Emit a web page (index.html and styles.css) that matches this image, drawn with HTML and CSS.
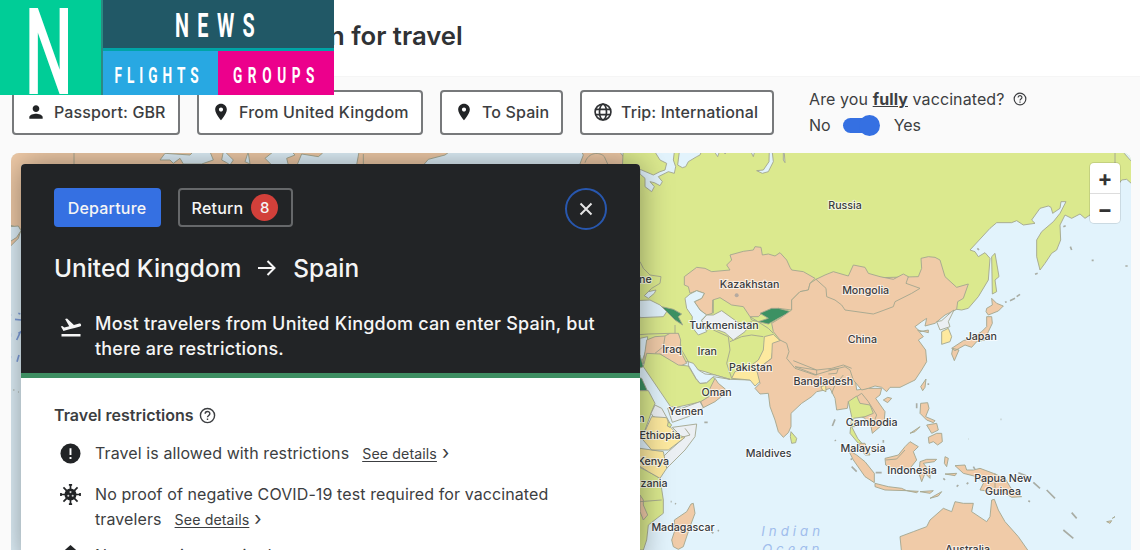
FILE: index.html
```html
<!DOCTYPE html>
<html lang="en">
<head>
    <meta charset="UTF-8">
    <meta name="viewport" content="width=device-width, initial-scale=1.0">
    <title>Travel map</title>
    <link rel="stylesheet" href="styles.css">
</head>
<body>
    <header class="top"><h1>n for travel</h1></header>

    <div class="filters">
        <button class="chip passport">
            <svg class="icon" viewBox="0 0 24 24"><path d="M12 12c2.21 0 4-1.79 4-4s-1.79-4-4-4-4 1.79-4 4 1.79 4 4 4zm0 2c-2.67 0-8 1.34-8 4v2h16v-2c0-2.66-5.33-4-8-4z"/></svg>
            <span>Passport: GBR</span>
        </button>
        <button class="chip from">
            <svg class="icon" viewBox="0 0 24 24"><path d="M12 2C8.13 2 5 5.13 5 9c0 5.25 7 13 7 13s7-7.75 7-13c0-3.87-3.13-7-7-7zm0 9.5c-1.38 0-2.5-1.12-2.5-2.5s1.12-2.5 2.5-2.5 2.5 1.12 2.5 2.5-1.12 2.5-2.5 2.5z"/></svg>
            <span>From United Kingdom</span>
        </button>
        <button class="chip to">
            <svg class="icon" viewBox="0 0 24 24"><path d="M12 2C8.13 2 5 5.13 5 9c0 5.25 7 13 7 13s7-7.75 7-13c0-3.87-3.13-7-7-7zm0 9.5c-1.38 0-2.5-1.12-2.5-2.5s1.12-2.5 2.5-2.5 2.5 1.12 2.5 2.5-1.12 2.5-2.5 2.5z"/></svg>
            <span>To Spain</span>
        </button>
        <button class="chip trip">
            <svg class="icon globe" viewBox="0 0 24 24"><circle cx="12" cy="12" r="9.5"/><ellipse cx="12" cy="12" rx="4.2" ry="9.5"/><path d="M3.2 8.8h17.6M3.2 15.2h17.6"/></svg>
            <span>Trip: International</span>
        </button>
        <div class="vaccine">
            <div class="question">
                <span>Are you <b>fully</b> vaccinated?</span>
                <svg class="help" viewBox="0 0 24 24"><circle cx="12" cy="12" r="10"/><path d="M8.7 9.6c0-4.3 6.6-4.3 6.6-.2 0 2.5-3.3 2.6-3.3 5.1M12 16.3v2"/></svg>
            </div>
            <div class="answer">
                <span>No</span>
                <i class="switch"></i>
                <span>Yes</span>
            </div>
        </div>
    </div>

    <main class="map">
        <!-- three map units to a pixel -->
        <svg class="world" viewBox="-1872 9 3360 1191">
            <!-- north america, greenland, scandinavia -->
            <g class="orange">
                <path d="M-1890-10H-930L-938 10-950 20-1000 12-1020 60H-1800V225L-1842 240-1850 265-1875 290V275L-1855 255-1845 235-1875 225Z"/>
                <path d="M-825-10-838 60H-660L-632 42-620 28-570 15-550 0Z"/>
                <path d="M-168-10-155 15-172 60H-20L-35 20-50 0Z"/>
                <path class="line" d="M-1683 9V42M-815 12V42M-150 38C-140 5-105 5-92 20L-82 42"/>
            </g>
            <g class="water">
                <path d="M-1410 10-1425 30-1395 30-1385 40-1365 25-1355 42H-1300L-1265 30-1275 5H-1325L-1335 15Z"/>
                <path d="M-1235 5-1240 30-1225 38-1215 45-1205 30-1230 5Z"/>
                <path d="M-1160 5-1170 35-1155 42-1160 10ZM-1085 5-1110 25-1090 45H-1040L-1045 25-1020 15-1035 0Z"/>
                <path d="M-1875 230-1850 228-1842 242-1855 262-1875 275Z"/>
            </g>

            <!-- russia and the land south-west of it -->
            <path class="green" d="M-35-10H1500V110L1475 88 1460 90 1440 118 1405 150 1365 195 1350 205 1335 192 1310 205 1290 195 1275 225 1277 270 1265 300 1250 310 1230 340 1215 360 1205 320V270L1220 245 1255 215 1275 190 1293 155 1278 155 1275 175 1253 190 1248 172 1240 168 1215 175 1190 210 1200 220 1165 225 1145 212 1130 218 1085 218 1065 235 1005 300 1020 305 1030 320 1050 308 1065 325 1060 390 1030 440 1000 475 980 480 965 478 900 460 700 520 440 600 430 690 345 690 285 688 240 675 210 665 190 660 160 635 100 640 0 640-40 100Z"/>
            <path class="green" d="M1070 320 1080 310 1092 380 1080 390 1085 425 1072 432Z"/>
            <g class="line">
                <path d="M15 335 25 355 45 375 78 380 75 400 50 415 35 430M120 525V550M0 555 40 552 105 550M130 550 140 600 160 635M230 495 235 540 280 560 285 600 275 640 290 685M285 575 320 560 350 555 385 560M235 450V490M1440 9V45"/>
                <path d="M370 515 350 510 345 500 400 535 415 550"/>
            </g>
            <g class="water">
                <path d="M50-10 75 30 95 40 90 60 75 65 55 75 15 58V72L30 85 30 110 50 125 58 110 45 95 58 98 75 107 82 95 70 80 100 65 118 70 122 50 115 30 120-10Z"/>
                <path d="M135-10 128 45 142 53 152 50 160 35 185 20 195 15 205-10ZM410-10 415 35 400 65 382 70 365 62 385 60 402 35 403 0ZM445 5V30L450 38 448 10ZM235 0 248 20 255 0ZM265 0 270 12 280 0ZM345 0 355 20 360 0Z"/>
                <path d="M0 452 45 450 75 465 95 485 85 500 15 503ZM28 437 40 425 63 420 58 430 40 445Z"/>
                <path d="M1450-10 1490 35V-10Z"/>
                <path d="M15 565 38 560 35 595 15 650Z"/>
            </g>
            <g class="orange">
                <path d="M148 380 185 352 210 355 230 365 285 360 275 345 290 330 285 315 325 304 355 300 360 290 378 292 382 315 400 312 420 318 435 308 455 330 465 352 470 360 505 365 540 385 525 400 520 420 495 425 470 450 470 480 430 475 380 490 370 500 345 500 325 470 290 465 255 443 233 450 232 490 215 495 195 480 178 455 200 445 208 430 185 422 165 430 160 410 148 405Z"/>
                <path d="M35 570 60 560 90 558 105 550 130 550 137 570 135 600 155 640 130 650 75 612 25 640Z"/>
                <path class="line" d="M90 558 85 590 60 610"/>
            </g>
            <path class="water" d="M150 445 165 432 185 422 208 430 200 445 178 455 195 480 215 495 200 510 215 545 190 555 170 530 172 500 155 475Z"/>
            <path class="gray" d="M215 495 235 495 260 482 285 500 320 525 350 515 330 545 295 570 270 548 235 535 215 540 200 512Z"/>
            <path class="dark" d="M375 490 410 475 430 475 468 485 430 505 400 522 370 515 400 505ZM80 470 115 478 140 492 130 500 143 525 120 510 100 490Z"/>

            <!-- middle east and africa -->
            <path class="green" d="M25 650 35 610 75 612 130 645 160 648 185 690 195 700 215 698 235 680 240 690 235 730 200 755 110 775Z"/>
            <path class="water" d="M160 635 175 640 190 660 210 672 240 675 285 688 235 680 215 698 195 700 183 685 160 645Z"/>
            <path class="orange" d="M240 685 250 700 272 718 265 735 240 755 205 773 197 755 225 738 225 715Z"/>
            <path class="gray" d="M98 775 110 770 140 775 195 755 205 773 160 800 112 817Z"/>
            <path class="dark" d="M0 620 15 615 25 650 12 655ZM0 680 20 685 37 722H0Z"/>
            <path class="green" d="M0 722H40L60 760 48 790 30 840 0 870ZM0 945 40 965 75 985 85 1050 85 1090 40 1125 35 1170 25 1200H0Z"/>
            <path class="gray" d="M60 765 80 775 105 820 95 815 55 800 48 790ZM112 832 185 822 180 860 150 900 95 955 85 920 100 905 145 865Z"/>
            <path class="yellow" d="M50 800 95 803 105 830 130 855 150 862 100 900 50 900 20 865ZM15 895 85 905 95 955 75 985 40 965 0 940Z"/>
            <path class="green" d="M100 815 110 825 105 832 97 828Z"/>
            <path class="orange" d="M15 1035 25 1050 25 1065 38 1095 25 1110 15 1085ZM175 1060 180 1090 165 1130 145 1190 130 1198 115 1190 110 1170 120 1140 118 1110 155 1085 168 1062Z"/>
            <path class="line" d="M15 1055 80 1050M150 835 165 855 130 865"/>

            <!-- south and east asia -->
            <path class="yellow" d="M388 560 415 553 435 572 470 580 420 585 412 610 410 625 370 655 380 690 360 708 345 690 290 685 300 665 345 655 350 645 370 630 385 600Z"/>
            <path class="orange" d="M412 580 440 570 500 600 655 640 665 720 700 715 740 715 735 735 722 745 750 785 747 820 712 850 708 830 690 805 655 790 640 755 637 775 605 780 600 745 585 715 570 720 545 725 530 740 500 760 468 790 468 830 460 848 445 862 430 845 420 810 405 770 400 730 375 732 360 715 375 700 365 660 410 625Z"/>
            <path class="orange" d="M543 388 525 400 520 420 495 425 470 450 470 480 435 505 410 520 415 545 435 570 455 580 462 605 455 625 480 655 540 675 590 660 630 650 645 660 655 690 680 720 700 715 720 708 740 712 755 725 765 712 795 712 840 690 860 660 875 635 872 600 850 570 865 560 848 540 880 548 880 540 855 545 840 530 860 515 875 505 870 528 900 520 930 495 965 478 968 455 985 445 1000 402 965 412 930 380 915 330 900 322 880 320 858 325 860 355 850 380Z"/>
            <path class="orange" d="M543 388 570 375 595 365 640 378 655 345 690 352 700 370 735 380 775 388 805 372 820 380 813 400 855 415 830 430 780 455 775 470 735 485 715 492 630 480 620 465 600 450 575 440 573 415Z"/>
            <path class="line" d="M475 632 545 660 590 655 625 645 650 655M545 660V675L480 650ZM580 660 610 655 605 670 580 672M590 730 600 705 625 675M665 740 680 730 700 755 725 795 715 820"/>
            <path class="yellow" d="M558 710 572 705 573 725 562 720Z"/>
            <path class="green" d="M640 755 665 738 675 760 705 765 715 790 690 800 655 805 660 830 650 830 668 865 685 885 670 880 645 850 650 800ZM468 845 485 865 482 878 470 880 466 860Z"/>
            <path class="gray" d="M905 515 920 512 950 485 957 480 940 515 945 530 915 540Z"/>
            <path class="yellow" d="M920 545 940 535 950 560 945 575 920 583Z"/>
            <g class="orange">
                <path d="M1070 445 1085 460 1105 468 1090 483 1060 495 1053 485 1055 475 1072 465ZM1055 500 1070 500 1072 520 1060 545 1050 570 1025 575 1010 592 990 585 960 602 950 595 985 572 1010 565 1040 545 1055 530ZM953 595 972 600 958 632 950 612Z"/>
                <path d="M857 710 873 687 870 712 863 722ZM745 750 758 742 770 745 758 758Z"/>
                <path d="M857 760 878 758 882 775 872 800 900 812 895 818 875 810 855 790ZM875 825 905 820 910 840 890 850ZM880 862 905 850 920 850 922 875 908 885 895 875 882 880ZM825 850 855 830 840 845Z"/>
                <path d="M640 900 665 915 690 935 718 970 718 998 690 980 655 930ZM720 1000 760 1010 800 1015 815 1022 750 1020 720 1010ZM670 880 690 880 705 915 690 915Z"/>
                <path d="M750 925 790 915 810 890 825 875 850 890 835 905 845 930 825 955 770 955 752 945ZM855 935 875 928 905 928 898 935 865 940 885 965 885 985 870 970 860 995 852 970Z"/>
                <path d="M815 1022 850 1024 845 1028ZM855 1025 895 1022 885 1030ZM885 1045 920 1025 910 1038ZM930 920 940 925 935 950 928 940ZM930 972 965 970 960 977Z"/>
                <path d="M960 947 990 945 995 960 1015 960 1035 955 1075 970 1110 985 1125 1010 1140 1030 1160 1040 1130 1042 1095 1020 1070 1025 1035 1020 1045 1000 1025 980 985 970Z"/>
                <path d="M795 1160 835 1145 875 1130 885 1110 925 1075 950 1085 960 1055 985 1060 1015 1060 1010 1085 1055 1115 1065 1100 1070 1050 1078 1048 1090 1080 1110 1115 1150 1160 1185 1210H800Z"/>
                <path class="line" d="M752 930 785 927 810 900M1080 970V1015"/>
                <path d="M1415 1115 1430 1112 1425 1120ZM1432 1105 1440 1100Z"/>
            </g>
            <path class="islands" d="M1110 457 1115 455M1125 452 1140 445M1145 440 1155 433M1306 290 1310 300M1370 331H1376M1471 348H1478M1200 373 1208 370M1027 295 1032 300M1285 230 1292 227M208 817H218M592 828 600 808M600 870 602 873M107 1055H110M120 1060 123 1062M230 1145 235 1150M248 1141 252 1143M745 870V878M650 950 665 965M648 925 650 930M1150 968 1175 978M1195 997 1215 1015M1235 1020 1260 1045M1310 1088 1325 1105M1285 1140 1315 1165M1097 808H1099M1000 867H1001M925 985 930 990M965 1010 970 1005M995 1002 1000 998M1015 950 1020 958M722 968H740M1180 1052 1185 1055M845 760V775M880 700V705"/>

            <g class="labels">
                <text x="630" y="176">Russia</text>
                <text x="344" y="414">Kazakhstan</text>
                <text x="692" y="432">Mongolia</text>
                <text x="682" y="580">China</text>
                <text x="267" y="536">Turkmenistan</text>
                <text x="111" y="610">Iraq</text>
                <text x="217" y="615">Iran</text>
                <text x="347" y="664">Pakistan</text>
                <text x="565" y="706">Bangladesh</text>
                <text x="245" y="738">Oman</text>
                <text x="153" y="794">Yemen</text>
                <text x="75" y="867">Ethiopia</text>
                <text x="55" y="945">Kenya</text>
                <text x="29" y="1012">Tanzania</text>
                <text x="-9" y="398">Ukraine</text>
                <text x="29" y="815" text-anchor="end">n</text>
                <text x="144" y="1144">Madagascar</text>
                <text x="401" y="920">Maldives</text>
                <text x="710" y="829">Cambodia</text>
                <text x="684" y="906">Malaysia</text>
                <text x="831" y="973">Indonesia</text>
                <text x="1039" y="570">Japan</text>
                <text x="1104" y="995">Papua New</text>
                <text x="1104" y="1034">Guinea</text>
                <text x="998" y="1208">Australia</text>
            </g>
            <circle class="city" cx="305" cy="436" r="6"/>
            <g class="sea">
                <text x="473" y="1158">Indian</text>
                <text x="473" y="1213">Ocean</text>
            </g>
            <path class="sea-marks" d="M-1850 490-1844 492M-1860 508-1842 510M-1874 492V498M-1850 550-1844 546-1855 570M-1874 550V560M-1848 615-1854 635M-1874 618V625"/>
            <path class="islands" d="M-1865 720H-1862M-1850 726H-1848"/>
        </svg>

        <div class="zoom">
            <button>+</button>
            <button>&minus;</button>
        </div>

        <section class="panel">
            <div class="summary">
                <div class="tabs">
                    <button class="tab active">Departure</button>
                    <button class="tab">Return <span class="badge">8</span></button>
                    <button class="close"><svg viewBox="0 0 14 14"><path d="M1.5 1.5 12.5 12.5M12.5 1.5 1.5 12.5"/></svg></button>
                </div>
                <h2>
                    <span>United Kingdom</span>
                    <svg class="arrow" viewBox="0 0 18 16"><path d="M0 8H16M9.500 1 16.500 8 9.500 15"/></svg>
                    <span>Spain</span>
                </h2>
                <div class="message">
                    <svg class="plane" viewBox="0 0 24 24"><path d="M2.5 19h19v2.500h-19zM22.070 9.640c-.21-.8-1.040-1.280-1.840-1.060L14.920 10l-6.900-6.430-1.930.51 4.140 7.170-4.970 1.330-1.970-1.540-1.450.39 1.820 3.160.77 1.330 1.600-.43 5.310-1.420 4.350-1.160L21 11.490c.81-.23 1.280-1.050 1.070-1.850z"/></svg>
                    <p>Most travelers from United Kingdom can enter Spain, but<br>there are restrictions.</p>
                </div>
            </div>
            <div class="details">
                <h3>
                    <span>Travel restrictions</span>
                    <svg class="help" viewBox="0 0 24 24"><circle cx="12" cy="12" r="10"/><path d="M8.7 9.6c0-4.3 6.6-4.3 6.6-.2 0 2.5-3.3 2.6-3.3 5.1M12 16.3v2"/></svg>
                </h3>
                <ul>
                    <li>
                        <svg class="item-icon" viewBox="0 0 22 22"><circle cx="11" cy="11" r="10.5"/><path class="cut" d="M11 5.5V12.500M11 14.700V16.800"/></svg>
                        <p>Travel is allowed with restrictions<a>See details</a><i>&rsaquo;</i></p>
                    </li>
                    <li>
                        <svg class="item-icon" viewBox="0 0 22 22">
                            <circle cx="11" cy="11" r="6.3"/>
                            <path class="spikes" d="M11 .5V21.500M.5 11H21.500M3.600 3.600 18.400 18.400M18.400 3.600 3.600 18.400M9.300 1H12.700M9.300 21H12.700M1 9.300V12.700M21 9.300V12.700"/>
                            <g class="dots"><circle cx="11" cy="8.500" r="1.100"/><circle cx="8.700" cy="12.300" r="1.100"/><circle cx="13.300" cy="12.300" r="1.100"/></g>
                        </svg>
                        <p>No proof of negative COVID-19 test required for vaccinated<br>travelers<a>See details</a><i>&rsaquo;</i></p>
                    </li>
                    <li>
                        <svg class="item-icon" viewBox="0 0 22 22"><path d="M11 0 20 8V21H2V8Z"/></svg>
                        <p>No quarantine required</p>
                    </li>
                </ul>
            </div>
        </section>
    </main>

    <!-- logo sits over the page corner -->
    <svg class="logo" viewBox="0 0 334 95">
        <rect width="334" height="95" fill="#00a4a6"/>
        <rect width="101" height="95" fill="#00cd97"/>
        <rect x="101" width="2" height="95" fill="#2b8a83"/>
        <rect x="103" width="231" height="48" fill="#215866"/>
        <rect x="103" y="51" width="115" height="44" fill="#28a8e2"/>
        <rect x="218" y="51" width="116" height="44" fill="#ec008c"/>
        <g>
            <text class="big" transform="translate(24.5 94) scale(.57 1)">N</text>
            <text class="news" transform="translate(175 36.5) scale(.6 1)">NEWS</text>
            <text class="small" transform="translate(114.5 83) scale(.62 1)">FLIGHTS</text>
            <text class="small groups" transform="translate(233 83) scale(.62 1)">GROUPS</text>
        </g>
    </svg>
</body>
</html>
```

FILE: styles.css
```css
body {
    margin: 0;
    height: 550px;
    overflow: hidden;
    background: #fafafa;
    color: #3c3e41;
    font-family: Inter, "Liberation Sans", sans-serif;
    font-size: 16px;
}

h1, h2, h3, p, ul {
    margin: 0;
    padding: 0;
}

button {
    font: inherit;
    color: inherit;
    padding: 0;
    box-sizing: border-box;
}

.top {
    height: 77px;
    border-bottom: 1px solid #f5f5f5;
    background: #fff;
    padding: 20px 0 0 329px;
    box-sizing: border-box;
}

h1 {
    font-size: 25.7px;
    line-height: 32px;
    font-weight: 600;
    color: #303235;
}

/* filters */

.filters {
    display: flex;
    gap: 17px;
    height: 76px;
    padding: 13px 0 0 12px;
    box-sizing: border-box;
}

.chip {
    display: flex;
    align-items: center;
    gap: 8px;
    height: 45px;
    padding: 0 0 1px 12px;
    border: 2px solid #77797b;
    border-radius: 4px;
    background: #fff;
    font-weight: 500;
    letter-spacing: 0.13px;
    white-space: nowrap;
}

.passport { width: 168px; }
.from { width: 226px; letter-spacing: 0.2px; }
.to { width: 123px; }
.trip { width: 194px; padding-left: 11px; }

.icon {
    width: 20px;
    height: 20px;
    fill: #222426;
}

.globe {
    fill: none;
    stroke: #303235;
    stroke-width: 2;
}

.vaccine {
    margin-left: 18px;
}

.question, .answer {
    display: flex;
    align-items: center;
    height: 26px;
}

.question {
    margin-top: -4px;
    gap: 8px;
    letter-spacing: 0.1px;
}

.question b {
    text-decoration: underline;
}

.help {
    width: 14px;
    height: 14px;
    fill: none;
    stroke: #3c3e41;
    stroke-width: 2;
}

.switch {
    position: relative;
    width: 36px;
    height: 15px;
    margin: 0 15px 0 12px;
    border-radius: 8px;
    background: #3570e2;
}

.switch::after {
    content: "";
    position: absolute;
    right: -1px;
    top: -3px;
    width: 21px;
    height: 21px;
    border-radius: 50%;
    background: #3570e2;
}

/* map */

.map {
    position: relative;
    width: 1120px;
    height: 397px;
    margin-left: 11px;
    border-radius: 8px 8px 0 0;
    overflow: hidden;
    background: #e2f3fc;
}

.world {
    display: block;
    width: 1120px;
    height: 397px;
}

.green, .orange, .yellow, .gray, .dark, .water {
    stroke: #a3a68f;
    stroke-width: 2.7;
    stroke-linejoin: round;
}

.green { fill: #dbe98e; }
.orange { fill: #f0cba8; }
.yellow { fill: #fde99f; }
.gray { fill: #ebeff3; }
.dark { fill: #3c9163; }
.water { fill: #e2f3fc; }

.line {
    fill: none;
    stroke: #a3a58f;
    stroke-width: 2.7;
}

.islands {
    fill: none;
    stroke: #a9ada5;
    stroke-width: 5;
}

.labels {
    font-size: 32px;
    font-weight: 500;
    text-anchor: middle;
    fill: #3a3c3e;
    stroke: rgba(255, 255, 255, 0.7);
    stroke-width: 6;
    paint-order: stroke;
}

.city {
    fill: #b5aaa0;
}

.sea {
    font-size: 40px;
    font-style: italic;
    letter-spacing: 12px;
    text-anchor: middle;
    fill: #a0bdec;
}

.sea-marks {
    fill: none;
    stroke: #7fa0de;
    stroke-width: 5;
}

.zoom {
    position: absolute;
    right: 11px;
    top: 10px;
    width: 30px;
    border-radius: 4px;
    background: #fff;
    box-shadow: 0 0 0 1px rgba(0, 0, 0, 0.1);
}

.zoom button {
    display: block;
    width: 30px;
    height: 30px;
    border: 0;
    background: none;
    font-size: 22px;
    line-height: 28px;
    font-weight: 700;
    color: #333;
}

.zoom button + button {
    border-top: 1px solid #ddd;
}

/* trip panel */

.panel {
    position: absolute;
    left: 10px;
    top: 11px;
    width: 619px;
    height: 400px;
    border-radius: 4px;
    overflow: hidden;
    background: #fff;
    box-shadow: 0 0 32px rgba(0, 0, 0, 0.4);
}

.summary {
    height: 214px;
    padding: 24px 33px 0;
    border-bottom: 5px solid #3e8e62;
    background: #222426;
    color: #f5f5f5;
    box-sizing: border-box;
    font-weight: 500;
}

.tabs {
    display: flex;
    gap: 17px;
}

.tab {
    display: flex;
    align-items: center;
    justify-content: center;
    gap: 8px;
    width: 115px;
    height: 39px;
    padding-right: 1px;
    border: 2px solid #66686a;
    border-radius: 4px;
    background: none;
    letter-spacing: 0.2px;
}

.active {
    width: 107px;
    border: 0;
    background: #3570e2;
}

.badge {
    width: 27px;
    height: 27px;
    border-radius: 50%;
    background: #d2403a;
    font-size: 15px;
    line-height: 27px;
}

.close {
    display: flex;
    align-items: center;
    justify-content: center;
    width: 42px;
    height: 42px;
    margin-left: auto;
    border: 2px solid #2857ae;
    border-radius: 50%;
    background: none;
}

.close svg {
    width: 14px;
    fill: none;
    stroke: #e5e5e5;
    stroke-width: 2;
}

h2 {
    display: flex;
    align-items: center;
    gap: 17px;
    height: 32px;
    margin-top: 22px;
    font-size: 24.4px;
    font-weight: 500;
    white-space: nowrap;
}

.arrow {
    width: 18px;
    fill: none;
    stroke: #f5f5f5;
    stroke-width: 2;
}

.message {
    display: flex;
    gap: 12px;
    margin-top: 28px;
    padding-left: 5px;
    font-size: 18px;
    line-height: 24.5px;
    letter-spacing: 0.2px;
    white-space: nowrap;
}

.plane {
    width: 24px;
    height: 24px;
    margin-top: 3px;
    fill: #f5f5f5;
}

.details {
    padding: 26px 33px 0;
}

h3 {
    display: flex;
    align-items: center;
    gap: 5px;
    height: 22px;
    font-size: 16px;
    font-weight: 600;
}

h3 .help {
    width: 17px;
    height: 17px;
}

ul {
    list-style: none;
}

li {
    display: flex;
    gap: 14px;
    padding: 15px 0 0 6px;
    line-height: 25px;
    letter-spacing: 0.1px;
    white-space: nowrap;
}

li + li {
    padding-top: 16px;
}

li + li + li {
    padding-top: 11px;
}

.item-icon {
    width: 21px;
    height: 21px;
    margin-top: 2px;
    fill: #222426;
}

.cut {
    stroke: #fff;
    stroke-width: 2;
}

.spikes {
    stroke: #222426;
    stroke-width: 1.8;
}

.dots {
    fill: #ccc;
}

li a {
    margin-left: 13px;
    font-size: 14.2px;
    text-decoration: underline;
    text-underline-offset: 2px;
}

li i {
    margin-left: 5px;
    font-style: normal;
    font-size: 19px;
    line-height: 1px;
}

/* logo */

.logo {
    position: absolute;
    left: 0;
    top: 0;
    width: 334px;
    height: 95px;
    fill: #fff;
    font-family: Roboto, "Liberation Sans", sans-serif;
}

.big {
    font-size: 120px;
    font-weight: 500;
}

.news {
    font-size: 33px;
    font-weight: 700;
    letter-spacing: 14px;
}

.small {
    font-size: 22px;
    font-weight: 700;
    letter-spacing: 8px;
}

.groups {
    letter-spacing: 9px;
}
```
